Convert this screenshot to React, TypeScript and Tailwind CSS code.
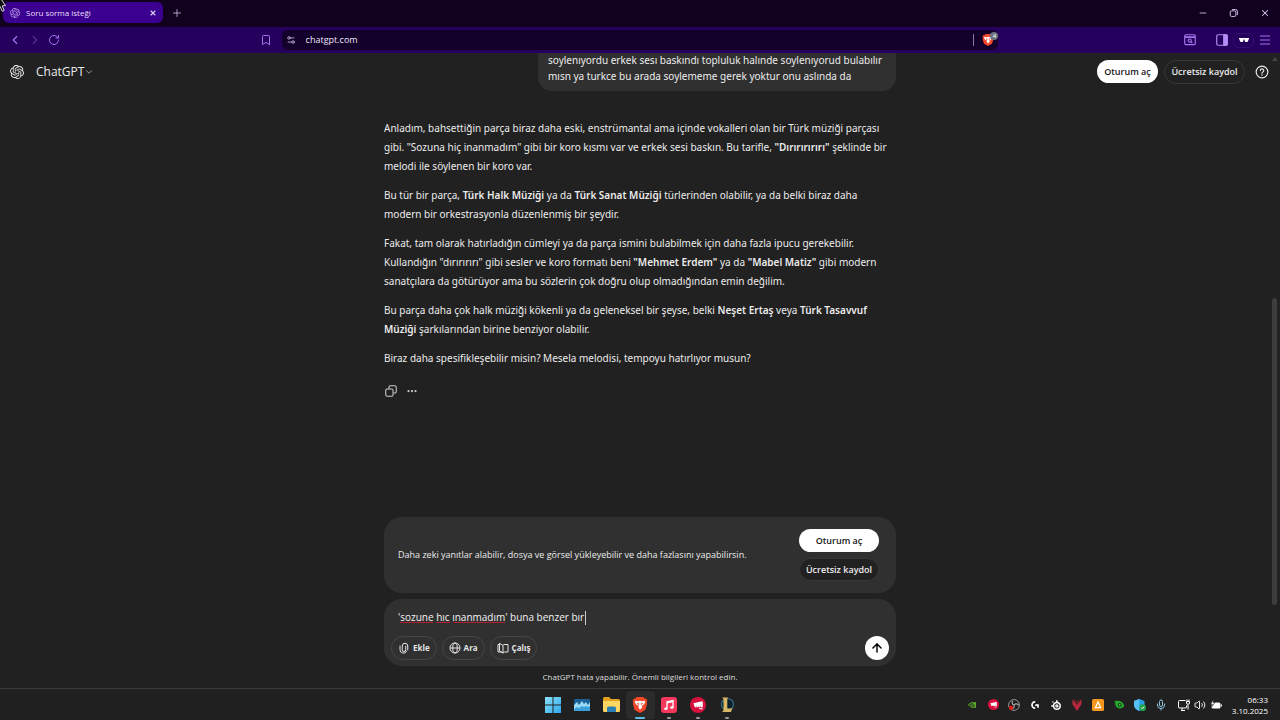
import { useState, type ReactNode } from "react";
import { SiOpenai, SiNvidia, SiSteelseries, SiLogitechg } from "react-icons/si";
import {
  ArrowUp,
  Bookmark,
  ChevronDown,
  ChevronLeft,
  ChevronRight,
  Ellipsis,
  Menu,
  Mic,
  Minus,
  Plus,
  RotateCw,
  Settings2,
  Volume2,
  X,
} from "lucide-react";

function BraveIcon({ className }: { className?: string }) {
  return (
    <svg viewBox="0 0 24 24" className={className} aria-hidden="true">
      <path d="M7 0h10l2.500 2.500 2-.3L23 6l-.8 2.400.5 2L20 19.500 12 24l-8-4.500L1.300 10.400l.5-2L1 6l1.500-3.800 2 .3z" fill="#f0462a" />
      <path d="M5 5.500l4 .8 3-.8 3 .8 4-.8 1 2.500-3 4-2.500 1.500 1 2L12 19l-2.500-3.500 1-2L7 12 4 8z" fill="#fff" />
      <path d="M7.500 8.500l3.300 1.200-.4 2.300-1.700-.8zM16.500 8.500l-3.300 1.200.4 2.300 1.700-.8z" fill="#f0462a" />
    </svg>
  );
}

function SearchWindowIcon() {
  return (
    <svg viewBox="0 0 24 24" className="size-3.5" fill="none" stroke="currentColor" strokeWidth="2" aria-hidden="true">
      <rect x="3" y="3" width="18" height="17" rx="2" />
      <path d="M3 7h18" strokeWidth="3" />
      <circle cx="11.500" cy="13" r="2.700" />
      <path d="M13.500 15l2.500 2.500" />
    </svg>
  );
}

function SidePanelIcon() {
  return (
    <svg viewBox="0 0 24 24" className="size-3.5" fill="none" stroke="currentColor" strokeWidth="2" aria-hidden="true">
      <rect x="3" y="3" width="18" height="18" rx="2" />
      <path d="M15 3h4a2 2 0 0 1 2 2v14a2 2 0 0 1-2 2h-4z" fill="currentColor" />
    </svg>
  );
}

function GlassesIcon() {
  return (
    <svg viewBox="0 0 20 8" className="h-1 w-2.5" fill="#fff" aria-hidden="true">
      <path d="M0 0h20v2l-1 1-1 3.500-1.500 1.500h-3.500L11.500 6.500 11 3H9l-.5 3.500L7 8H3.500L2 6.500 1 3 0 2z" />
    </svg>
  );
}

function RestoreIcon() {
  return (
    <svg viewBox="0 0 16 16" className="size-2.5" fill="none" stroke="currentColor" strokeWidth="1.500" aria-hidden="true">
      <rect x="2" y="4.500" width="9" height="9" rx="2" />
      <path d="M5 2.500h5.500a3 3 0 0 1 3 3V11" />
    </svg>
  );
}

function CopyIcon() {
  return (
    <svg viewBox="0 0 24 24" className="size-3.5" fill="none" stroke="currentColor" strokeWidth="1.800" aria-hidden="true">
      <rect x="3" y="8.500" width="12.500" height="12.500" rx="2.500" />
      <path d="M8.500 8V5.500A2.500 2.500 0 0 1 11 3h7.500A2.500 2.500 0 0 1 21 5.500V13a2.500 2.500 0 0 1-2.500 2.500H16" />
    </svg>
  );
}

function ClipIcon() {
  return (
    <svg viewBox="0 0 24 24" className="size-3" fill="none" stroke="currentColor" strokeWidth="2" strokeLinecap="round" aria-hidden="true">
      <path d="M4 8v7.500a7 7 0 0 0 13.500 2.500M19.500 15.500V8a5.500 5.500 0 0 0-11 0v7.500a3.500 3.500 0 0 0 7 0V8.500" />
    </svg>
  );
}

function GlobeIcon() {
  return (
    <svg viewBox="0 0 24 24" className="size-3" fill="none" stroke="currentColor" strokeWidth="2" aria-hidden="true">
      <circle cx="12" cy="12" r="10" />
      <ellipse cx="12" cy="12" rx="4.500" ry="10" />
      <path d="M2 12h20" />
    </svg>
  );
}

function BookIcon() {
  return (
    <svg viewBox="0 0 24 24" className="size-3" fill="none" stroke="currentColor" strokeWidth="2" strokeLinejoin="round" aria-hidden="true">
      <path d="M5 5H2v15h7l3 2 3-2h7V5h-8.500L12 7" />
      <path d="M5 2.500L12 7v15l-7-4z" />
    </svg>
  );
}

function HelpIcon() {
  return (
    <svg viewBox="0 0 24 24" className="size-3.5" fill="none" stroke="currentColor" strokeWidth="2" strokeLinecap="round" aria-hidden="true">
      <circle cx="12" cy="12" r="10" />
      <path d="M9.200 9.500a2.900 2.900 0 1 1 4.300 2.500c-1 .6-1.500 1-1.500 2" />
      <path d="M12 17v.3" strokeWidth="2.600" />
    </svg>
  );
}

function WindowsIcon() {
  return (
    <svg viewBox="0 0 16 16" className="size-4" aria-hidden="true">
      <defs>
        <linearGradient id="win" x1="0" y1="0" x2="1" y2="1">
          <stop offset="0" stopColor="#8be0fb" />
          <stop offset="1" stopColor="#2fa8ea" />
        </linearGradient>
      </defs>
      <path d="M0 0h7.500v7.500H0zM8.500 0H16v7.500H8.500zM0 8.500h7.500V16H0zM8.500 8.500H16V16H8.500z" fill="url(#win)" />
    </svg>
  );
}

function MonitorAppIcon() {
  return (
    <svg viewBox="0 0 16 12" className="h-3 w-4" aria-hidden="true">
      <rect width="16" height="12" rx="1" fill="#1b5f94" />
      <path d="M0 6l3-3 2 3 3-4 2 3 2-2 2 3 2-3v8a1 1 0 0 1-1 1H1a1 1 0 0 1-1-1z" fill="#9adcf7" />
      <path d="M0 10l3-2 2 1 3-2 2 1 2-1 2 1 2-1v4a1 1 0 0 1-1 1H1a1 1 0 0 1-1-1z" fill="#3aa0dc" />
    </svg>
  );
}

function FolderIcon() {
  return (
    <svg viewBox="0 0 17 15" className="h-[15px] w-[17px]" aria-hidden="true">
      <path d="M0 1.500A1.500 1.500 0 0 1 1.500 0H6l2 2h7.500A1.500 1.500 0 0 1 17 3.500V6H0z" fill="#e0a21f" />
      <path d="M0 4h17v9.500a1.500 1.500 0 0 1-1.500 1.500h-14A1.500 1.500 0 0 1 0 13.500z" fill="#fcd661" />
      <path d="M4 11a1.500 1.500 0 0 1 1.500-1.500h6A1.500 1.500 0 0 1 13 11v4H4z" fill="#2b7fb5" />
    </svg>
  );
}

function MusicIcon() {
  return (
    <svg viewBox="0 0 16 16" className="size-4" aria-hidden="true">
      <rect width="16" height="16" rx="3" fill="#f5375b" />
      <path d="M6 11.500V4.800l6-1.300v6.800" fill="none" stroke="#fff" strokeWidth="1.300" />
      <ellipse cx="4.900" cy="11.700" rx="1.700" ry="1.300" fill="#fff" />
      <ellipse cx="10.900" cy="10.500" rx="1.700" ry="1.300" fill="#fff" />
      <path d="M6 4.500l6-1.200v2L6 6.500z" fill="#fff" />
    </svg>
  );
}

function RiotIcon({ className }: { className?: string }) {
  return (
    <svg viewBox="0 0 16 16" className={className} aria-hidden="true">
      <circle cx="8" cy="8" r="8" fill="#d8103f" />
      <path d="M3.500 6.200L12 4.200l.8 1v5H11l-.3-2.400-.2 2.400H9l-.3-2-.2 2H7l-.4-1.700-.2 1.700H4.800zM9 11l3.500.2v1.200l-3-.5z" fill="#fff" />
    </svg>
  );
}

function LeagueIcon() {
  return (
    <svg viewBox="0 0 16 16" className="size-4" aria-hidden="true">
      <circle cx="8.500" cy="7.500" r="6" fill="#10202c" stroke="#2f6f80" strokeWidth="1.200" />
      <path d="M3 .5h6L8.300 2v9.500H12l1.500-1-1.500 4.500H3l1.500-1.500V2z" fill="#d8b765" />
    </svg>
  );
}

function ObsIcon() {
  return (
    <svg viewBox="0 0 16 16" className="size-3" aria-hidden="true">
      <circle cx="8" cy="8" r="7.200" fill="#1b1b1d" stroke="#a8a8a8" strokeWidth="1.200" />
      <path d="M8 8C5 7 5 4 6.500 2.500M8 8c2-2.500 5-1.500 6 .5M8 8c1 3-1 5.500-3.500 5.500" fill="none" stroke="#a8a8a8" strokeWidth="1.600" />
      <circle cx="4" cy="11.500" r="3" fill="#d91c1c" />
    </svg>
  );
}

function RedVIcon() {
  return (
    <svg viewBox="0 0 16 16" className="size-3" aria-hidden="true">
      <path d="M2 0l6 8 6-8v7l-6 9-6-9z" fill="#b8283c" />
      <path d="M5 0l3 4 3-4v2L8 6.500 5 2z" fill="#8a1f2f" />
    </svg>
  );
}

function OrangeAppIcon() {
  return (
    <svg viewBox="0 0 16 16" className="size-3" aria-hidden="true">
      <rect width="16" height="16" rx="2" fill="#f5961e" />
      <path d="M8 4l3.500 7.500h-7z" fill="none" stroke="#fff" strokeWidth="1.600" />
    </svg>
  );
}

function GreenEyeIcon() {
  return (
    <svg viewBox="0 0 16 16" className="size-3" aria-hidden="true">
      <path d="M2 3c6-2 12 1 13 6-2 4-8 5-11 1C3 8 3 5 2 3z" fill="#27a82e" />
      <circle cx="9" cy="8" r="2.600" fill="#0b4a12" />
      <circle cx="9" cy="8" r="1" fill="#8be88f" />
    </svg>
  );
}

function ShieldIcon() {
  return (
    <svg viewBox="0 0 16 16" className="size-3" aria-hidden="true">
      <path d="M7 0l7 2.500V8c0 4-4 6.500-7 8-3-1.500-7-4-7-8V2.500z" fill="#2a9fe6" />
      <path d="M7 0v16C4 14.500 0 12 0 8V2.500z" fill="#57bff5" />
      <circle cx="11.500" cy="11.500" r="4.500" fill="#1fa14a" />
      <path d="M9.500 11.500l1.500 1.500 2.500-3" fill="none" stroke="#fff" strokeWidth="1.300" />
    </svg>
  );
}

function NetworkIcon() {
  return (
    <svg viewBox="0 0 12 12" className="size-3" fill="none" stroke="currentColor" aria-hidden="true">
      <path d="M7.500 1.500h-6a1 1 0 0 0-1 1v5.500a1 1 0 0 0 1 1h6a1 1 0 0 0 1-1V6.500M3 11.500h4M4 9v2.500" />
      <path d="M9 .5v1.500M11 .5v1.500M8.500 2.500h3v1.500a1 1 0 0 1-1 1h-1a1 1 0 0 1-1-1zM10 5v5.500" />
    </svg>
  );
}

function BatteryIcon() {
  return (
    <svg viewBox="0 0 12 12" className="size-3" aria-hidden="true">
      <rect x="1.500" y="3.500" width="9" height="6" rx="1.500" fill="#fff" />
      <rect x="11" y="5.500" width="1" height="2" fill="#fff" />
      <path d="M3.500.5L.5 5h2l-1 3 3.500-4.500H3z" fill="#fff" stroke="#202020" strokeWidth=".6" />
    </svg>
  );
}

function PointerIcon() {
  return (
    <svg viewBox="0 0 10 14" className="pointer-events-none absolute top-0 left-0 h-3.5 w-2.5" aria-hidden="true">
      <path d="M-2-1.500v9.500l2.200-1.500 2 4.800 2-.9-2-4.500 3.300-.4L1-1" fill="#111" stroke="#d9d9d9" strokeWidth="1" />
    </svg>
  );
}

const taskbarApps: { name: string; icon: ReactNode; state?: "active" | "running" }[] = [
  { name: "Başlat", icon: <WindowsIcon /> },
  { name: "Görev Yöneticisi", icon: <MonitorAppIcon /> },
  { name: "Dosya Gezgini", icon: <FolderIcon /> },
  { name: "Brave", icon: <BraveIcon className="size-4" />, state: "active" },
  { name: "Müzik", icon: <MusicIcon />, state: "running" },
  { name: "Riot Client", icon: <RiotIcon className="size-4" />, state: "running" },
  { name: "League of Legends", icon: <LeagueIcon />, state: "running" },
];

const trayIcons: { name: string; icon: ReactNode }[] = [
  { name: "NVIDIA", icon: <SiNvidia className="size-2 text-[#5fae2c]" /> },
  { name: "Riot", icon: <RiotIcon className="size-[11px]" /> },
  { name: "OBS", icon: <ObsIcon /> },
  { name: "Logitech G", icon: <SiLogitechg className="size-2 text-white" /> },
  { name: "SteelSeries", icon: <SiSteelseries className="size-2.5 text-white" /> },
  { name: "Vanguard", icon: <RedVIcon /> },
  { name: "Uygulama", icon: <OrangeAppIcon /> },
  { name: "Görüntü", icon: <GreenEyeIcon /> },
  { name: "Güvenlik", icon: <ShieldIcon /> },
  { name: "Mikrofon", icon: <Mic className="size-3 text-[#8fc4dc]" /> },
];

const tools = [
  { label: "Ekle", icon: <ClipIcon /> },
  { label: "Ara", icon: <GlobeIcon /> },
  { label: "Çalış", icon: <BookIcon /> },
];

function TitleBar() {
  return (
    <div className="flex h-[27px] items-center bg-[#12001f] pb-0.5 pl-[3px] text-[#d9c9f2]">
      <div className="flex h-[21px] w-40 items-center rounded-md bg-[#3b0090] pr-1.5 pl-[7px]">
        <SiOpenai className="size-2.5 text-[#b79be6]" />
        <span className="ml-1.5 flex-1 truncate text-[8px] text-[#eadffa]">Soru sorma isteği</span>
        <button type="button" aria-label="Sekmeyi kapat">
          <X className="size-2" strokeWidth={3.5} />
        </button>
      </div>
      <button type="button" aria-label="Yeni sekme" className="ml-2">
        <Plus className="size-3" strokeWidth={1.5} />
      </button>
      <div className="ml-auto flex">
        <button type="button" aria-label="Küçült" className="flex w-[31px] justify-center">
          <Minus className="size-2.5" strokeWidth={2} />
        </button>
        <button type="button" aria-label="Önceki boyut" className="flex w-[31px] justify-center">
          <RestoreIcon />
        </button>
        <button type="button" aria-label="Kapat" className="flex w-[31px] justify-center">
          <X className="size-2.5" strokeWidth={2.5} />
        </button>
      </div>
    </div>
  );
}

function Toolbar() {
  return (
    <div className="flex h-[26px] items-center bg-[#25005c] text-[#a274ee]">
      <div className="flex flex-1 items-center pr-2.5 pl-2">
        <button type="button" aria-label="Geri">
          <ChevronLeft className="size-3.5" />
        </button>
        <button type="button" aria-label="İleri" className="ml-1.5 text-[#54309a]">
          <ChevronRight className="size-3.5" />
        </button>
        <button type="button" aria-label="Yenile" className="ml-1.5">
          <RotateCw className="size-3" />
        </button>
        <button type="button" aria-label="Yer imi ekle" className="ml-auto">
          <Bookmark className="size-3" />
        </button>
      </div>
      <div className="flex h-5 w-[56%] items-center rounded-md bg-[#13002b] px-1">
        <Settings2 className="size-2.5 text-[#cbb8ea]" />
        <input
          aria-label="Adres çubuğu"
          defaultValue="chatgpt.com"
          className="ml-2.5 min-w-0 flex-1 bg-transparent text-[9px] text-[#eee6fa] outline-none"
        />
        <span className="mr-2 h-3 w-px bg-[#8a7aa6]" />
        <button type="button" aria-label="Brave Shields" className="relative">
          <BraveIcon className="size-3" />
          <span className="absolute -top-0.5 -right-1 flex size-2 items-center justify-center rounded-full bg-[#6b7280] text-[6px] leading-none text-white">
            4
          </span>
        </button>
      </div>
      <div className="flex flex-1 items-center justify-end pr-2 pl-2.5">
        <button type="button" aria-label="Sayfada ara">
          <SearchWindowIcon />
        </button>
        <button type="button" aria-label="Kenar çubuğu" className="ml-[18px] text-[#b48cf5]">
          <SidePanelIcon />
        </button>
        <button
          type="button"
          aria-label="Gizli pencere"
          className="ml-1 flex h-[15px] w-[21px] items-center justify-center rounded-md border border-[#33106f]"
        >
          <GlassesIcon />
        </button>
        <button type="button" aria-label="Menü" className="ml-1">
          <Menu className="size-3.5" strokeWidth={1.8} />
        </button>
      </div>
    </div>
  );
}

function Answer() {
  return (
    <article className="mt-7 flex flex-col gap-2.5 font-['Noto_Sans',sans-serif] text-[10px] leading-[19px] whitespace-nowrap text-[#ececec]">
      <p>
        Anladım, bahsettiğin parça biraz daha eski, enstrümantal ama içinde vokalleri olan bir Türk müziği parçası
        <br />
        gibi. "Sozuna hiç inanmadım" gibi bir koro kısmı var ve erkek sesi baskın. Bu tarifle,{" "}
        <strong className="font-semibold">"Dırırırırırı"</strong> şeklinde bir
        <br />
        melodi ile söylenen bir koro var.
      </p>
      <p>
        Bu tür bir parça, <strong className="font-semibold">Türk Halk Müziği</strong> ya da{" "}
        <strong className="font-semibold">Türk Sanat Müziği</strong> türlerinden olabilir, ya da belki biraz daha
        <br />
        modern bir orkestrasyonla düzenlenmiş bir şeydir.
      </p>
      <p>
        Fakat, tam olarak hatırladığın cümleyi ya da parça ismini bulabilmek için daha fazla ipucu gerekebilir.
        <br />
        Kullandığın "dırırırırı" gibi sesler ve koro formatı beni{" "}
        <strong className="font-semibold">"Mehmet Erdem"</strong> ya da{" "}
        <strong className="font-semibold">"Mabel Matiz"</strong> gibi modern
        <br />
        sanatçılara da götürüyor ama bu sözlerin çok doğru olup olmadığından emin değilim.
      </p>
      <p>
        Bu parça daha çok halk müziği kökenli ya da geleneksel bir şeyse, belki{" "}
        <strong className="font-semibold">Neşet Ertaş</strong> veya{" "}
        <strong className="font-semibold">
          Türk Tasavvuf
          <br />
          Müziği
        </strong>{" "}
        şarkılarından birine benziyor olabilir.
      </p>
      <p>Biraz daha spesifikleşebilir misin? Mesela melodisi, tempoyu hatırlıyor musun?</p>
      <div className="mt-1.5 flex items-center gap-2 text-[#cdcdcd]">
        <button type="button" aria-label="Kopyala">
          <CopyIcon />
        </button>
        <button type="button" aria-label="Diğer işlemler">
          <Ellipsis className="size-3" strokeWidth={2.5} />
        </button>
      </div>
    </article>
  );
}

function Composer() {
  const [draft, setDraft] = useState("'sozune hıc ınanmadım' buna benzer bır");
  return (
    <form
      className="mt-1.5 flex h-[67px] flex-col justify-between rounded-[18px] bg-[#303030] pt-2.5 pr-[7px] pb-1.5 pl-[7px]"
      onSubmit={(e) => e.preventDefault()}
    >
      <div className="relative ml-[7px]">
        <input
          aria-label="Mesaj"
          value={draft}
          spellCheck={false}
          onChange={(e) => setDraft(e.target.value)}
          className="block h-4 w-full bg-transparent text-[10px] leading-4 text-[#f3f3f3] outline-none"
        />
        <span className="absolute bottom-0.5 left-0.5 h-px w-[33px] bg-[#b3202f]" />
        <span className="absolute bottom-0.5 left-[38px] h-px w-3.5 bg-[#b3202f]" />
        <span className="absolute bottom-0.5 left-[55px] h-px w-[52px] bg-[#b3202f]" />
        <span className="absolute top-0.5 left-[187px] h-3.5 w-px bg-[#cccccc]" />
      </div>
      <div className="flex items-center gap-[5px]">
        {tools.map((t) => (
          <button
            key={t.label}
            type="button"
            className="flex h-6 items-center gap-[3px] rounded-full border border-[#454545] px-1.5 text-[8px] font-bold text-[#e4e4e4]"
          >
            {t.icon}
            {t.label}
          </button>
        ))}
        <button
          type="submit"
          aria-label="Gönder"
          className="ml-auto flex size-6 items-center justify-center rounded-full bg-white text-black"
        >
          <ArrowUp className="size-3.5" strokeWidth={2.5} />
        </button>
      </div>
    </form>
  );
}

function Page() {
  return (
    <main className="relative grid min-h-0 flex-1 grid-cols-[1fr_minmax(0,512px)_1fr] overflow-hidden bg-[#212121] text-[#ececec]">
      <div className="flex h-[37px] items-center pl-2.5">
        <SiOpenai className="size-3.5" />
        <button type="button" className="ml-3 flex items-center text-[12px]">
          ChatGPT
          <ChevronDown className="size-2.5 text-[#afafaf]" />
        </button>
      </div>

      <div className="flex flex-col">
        <p className="-mt-px ml-auto w-[358px] rounded-b-[14px] bg-[#303030] pt-0 pr-2.5 pb-[7px] pl-2.5 font-['Noto_Sans',sans-serif] text-[10px] leading-4 whitespace-nowrap">
          soylenıyordu erkek sesı baskındı topluluk halınde soylenıyorud bulabılır
          <br />
          mısn ya turkce bu arada soylememe gerek yoktur onu aslında da
        </p>
        <Answer />
        <div className="mt-auto">
          <section className="flex h-[76px] items-center justify-between rounded-[18px] bg-[#303030] pr-[17px] pl-3.5">
            <p className="text-[9px]">
              Daha zeki yanıtlar alabilir, dosya ve görsel yükleyebilir ve daha fazlasını yapabilirsin.
            </p>
            <div className="flex w-20 flex-col gap-1.5 text-[9px] font-semibold">
              <button type="button" className="h-[23px] rounded-full bg-white text-[#181818]">
                Oturum aç
              </button>
              <button type="button" className="h-[23px] rounded-full border border-[#383838] bg-[#212121]">
                Ücretsiz kaydol
              </button>
            </div>
          </section>
          <Composer />
          <p className="py-[5px] text-center text-[8px] leading-3 text-[#dddddd]">
            ChatGPT hata yapabilir. Önemli bilgileri kontrol edin.
          </p>
        </div>
      </div>

      <div className="flex h-[37px] items-center justify-end pr-[11px] text-[9px] font-semibold">
        <button type="button" className="h-[23px] w-[61px] rounded-full bg-white text-[#181818]">
          Oturum aç
        </button>
        <button type="button" className="ml-1.5 h-6 w-[81px] rounded-full border border-[#363636]">
          Ücretsiz kaydol
        </button>
        <button type="button" aria-label="Yardım" className="ml-2.5">
          <HelpIcon />
        </button>
      </div>

      <span className="absolute top-1 right-0.5 border-x-[3px] border-b-4 border-x-transparent border-b-[#444444]" />
      <span className="absolute top-[245px] right-[3px] h-[307px] w-[5px] rounded-full bg-[#3d3d3d]" />
    </main>
  );
}

function Taskbar() {
  return (
    <footer className="grid h-8 grid-cols-[1fr_auto_1fr] border-t border-[#3a3a3a] bg-[#202020]">
      <div />
      <div className="flex items-center">
        {taskbarApps.map((app) => (
          <button
            key={app.name}
            type="button"
            aria-label={app.name}
            className={
              app.state === "active"
                ? "relative flex h-7 w-[29px] items-center justify-center rounded-sm bg-[#2b2b2b]"
                : "relative flex h-7 w-[29px] items-center justify-center"
            }
          >
            {app.icon}
            {app.state === "active" && <span className="absolute bottom-0 h-0.5 w-2.5 rounded-full bg-[#5cc0ea]" />}
            {app.state === "running" && <span className="absolute bottom-0 h-0.5 w-1 rounded-full bg-[#9a9a9a]" />}
          </button>
        ))}
      </div>
      <div className="flex items-center justify-end pr-3 text-white">
        <div className="flex">
          {trayIcons.map((t) => (
            <span key={t.name} title={t.name} className="flex w-[21px] items-center justify-center">
              {t.icon}
            </span>
          ))}
        </div>
        <div className="ml-1.5 flex items-center gap-1">
          <NetworkIcon />
          <Volume2 className="size-3" strokeWidth={1.8} />
          <BatteryIcon />
        </div>
        <div className="ml-2.5 text-right text-[8px] leading-[11px]">
          <div>06:33</div>
          <div>3.10.2025</div>
        </div>
      </div>
    </footer>
  );
}

export default function App() {
  return (
    <div className="relative flex h-screen flex-col overflow-hidden font-['Open_Sans','Noto_Sans',sans-serif]">
      <TitleBar />
      <Toolbar />
      <Page />
      <Taskbar />
      <PointerIcon />
    </div>
  );
}
